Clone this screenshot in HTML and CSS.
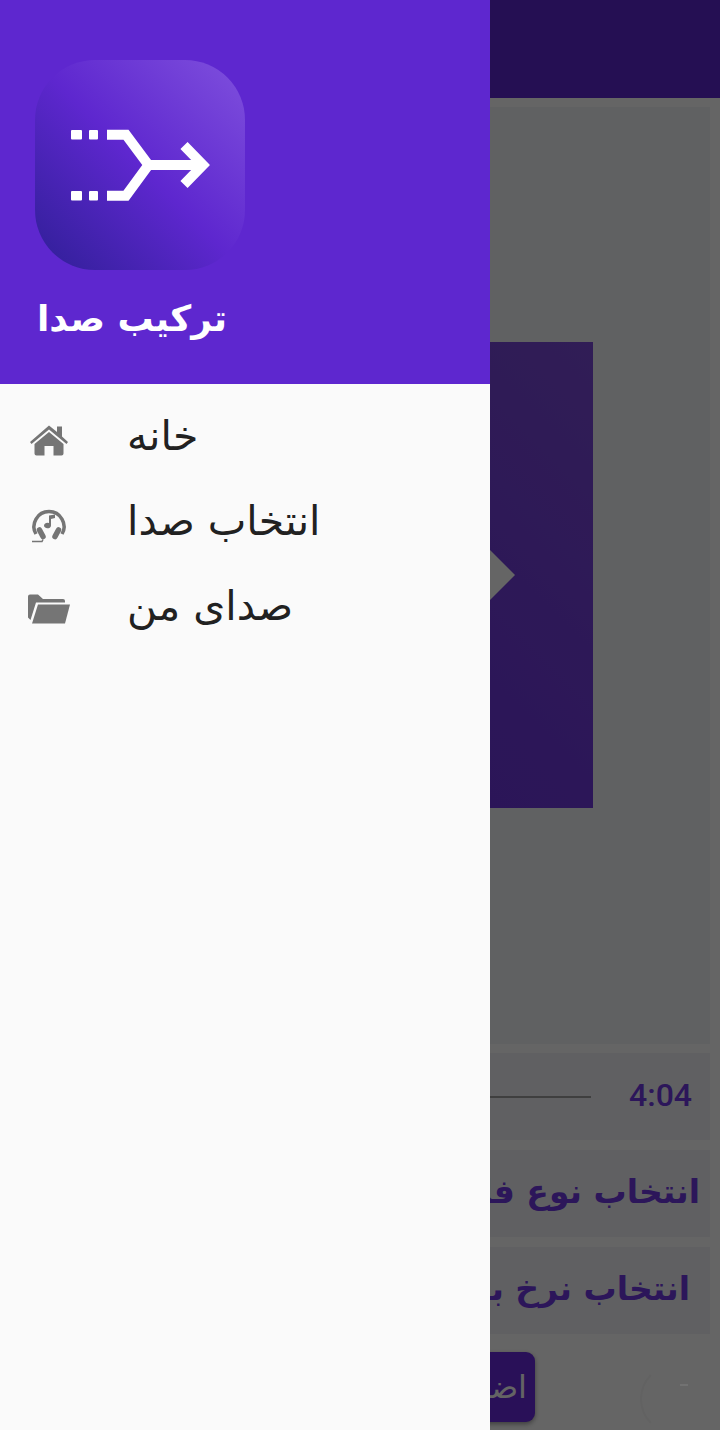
FILE: index.html
```html
<!DOCTYPE html>
<html lang="fa">

<head>
    <meta charset="utf-8">
    <meta name="viewport" content="width=device-width, initial-scale=1.0">
    <title>ترکیب صدا</title>
    <link rel="stylesheet" href="styles.css">
</head>

<body>
    <div class="app">
        <header class="appbar"></header>

        <main class="innehall">
            <section class="kort_stor">
                <div class="spelare">
                    <div class="play"></div>
                </div>
            </section>

            <section class="rad tid">
                <div class="linje"></div>
                <span class="tid_text">4:04</span>
            </section>
            <section class="rad val" dir="rtl">انتخاب نوع فایل</section>
            <section class="rad val val_tva" dir="rtl">انتخاب نرخ بیت</section>

            <div class="botten">
                <button class="lagg_till" dir="rtl">اضافه</button>
                <div class="cirkel"></div>
            </div>
        </main>

        <!-- scrim + drawer ligger ovanpå sidan -->
        <div class="scrim"></div>
        <div class="prick"></div>
        <aside class="drawer">
            <div class="drawer_top">
                <svg class="logo" viewBox="0 0 210 210">
                    <defs>
                        <linearGradient id="logofarg" x1="0" y1="1" x2="1" y2="0">
                            <stop offset="0" stop-color="#2f1f96" />
                            <stop offset="0.5" stop-color="#5e27cf" />
                            <stop offset="1" stop-color="#7f50dd" />
                        </linearGradient>
                    </defs>
                    <rect width="210" height="210" rx="60" fill="url(#logofarg)" />
                    <g fill="#fff">
                        <rect x="36" y="70" width="11" height="9.500" rx="1" />
                        <rect x="54" y="70" width="9" height="9.500" rx="1" />
                        <rect x="36" y="131" width="11" height="9.500" rx="1" />
                        <rect x="54" y="131" width="9" height="9.500" rx="1" />
                    </g>
                    <path d="M72 74.800H91L113.500 105H168M72 135.800H91L113.500 105" fill="none" stroke="#fff" stroke-width="10" />
                    <path d="M149 85.500L168 105L149 124.500" fill="none" stroke="#fff" stroke-width="10" />
                </svg>
                <h1 class="app_namn" dir="rtl">ترکیب صدا</h1>
            </div>

            <nav class="meny">
                <a class="meny_rad">
                    <svg class="ikon" viewBox="0 0 42 38">
                        <path d="M21 4.500L29 11V5.500H34V15.500L40 21L38.500 23L21 8.500L3.500 23L2 21Z" fill="#757575" />
                        <path d="M21 11L35.500 23V32.500a2 2 0 0 1-2 2H25.500V25H16.500V34.500H8.500a2 2 0 0 1-2-2V23Z" fill="#757575" />
                    </svg>
                    <span dir="rtl">خانه</span>
                </a>
                <a class="meny_rad">
                    <svg class="ikon" viewBox="0 0 42 38">
                        <path d="M8 28A15 15 0 1 1 34 28" fill="none" stroke="#757575" stroke-width="3.500" />
                        <path d="M11.500 24L15 30.500M30.500 24L27 30.500" fill="none" stroke="#757575" stroke-width="5.500" stroke-linecap="round" />
                        <path d="M21 9.500L27 8.500V12L23 13V19.500a3.500 2.800 0 1 1-2-2.500Z" fill="#757575" />
                        <path d="M4 35.500H14L15 33.500" fill="none" stroke="#757575" stroke-width="1.500" />
                    </svg>
                    <span dir="rtl">انتخاب صدا</span>
                </a>
                <a class="meny_rad">
                    <svg class="ikon" viewBox="0 0 42 38">
                        <path d="M0 5.500a2 2 0 0 1 2-2H10L15 8H35a2 2 0 0 1 2 2V11.500H8L2.500 29L0 26.500Z" fill="#757575" />
                        <path d="M10 13.500H42L37 32.500H4Z" fill="#757575" />
                    </svg>
                    <span dir="rtl">صدای من</span>
                </a>
            </nav>
        </aside>
    </div>
</body>

</html>
```

FILE: styles.css
```css
html,
body {
    margin: 0px;
    background-color: #fdfdfd;
    font-family: "DejaVu Sans", "Noto Sans", sans-serif;
}

.app {
    position: relative;
    width: 720px;
    height: 1430px;
    overflow: hidden;
}

.appbar {
    height: 98px;
    background-color: #5e27cf;
}

.innehall {
    display: flex;
    flex-direction: column;
    padding: 9px 10px 0px 10px;
}

.kort_stor {
    height: 937px;
    display: flex;
    align-items: center;
    justify-content: center;
    background-color: #f0f2f5;
}

.spelare {
    width: 466px;
    height: 466px;
    margin-top: -1px;
    box-sizing: border-box;
    padding-right: 78px;
    display: flex;
    align-items: center;
    justify-content: flex-end;
    background: linear-gradient(225deg, #7a4ad6, #6e38dc 50%, #6a2ed8);
}

.play {
    width: 0px;
    height: 0px;
    border-style: solid;
    border-width: 75px 0px 75px 75px;
    border-color: transparent transparent transparent #fdfdfd;
}

.rad {
    height: 87px;
    margin-top: 10px;
    display: flex;
    align-items: center;
    background-color: #f0f1f4;
    color: #6e38e0;
}

.tid {
    margin-top: 9px;
    justify-content: flex-end;
}

.linje {
    flex: 1;
    height: 2px;
    margin-right: 38px;
    background-color: #9e9e9e;
}

.tid_text {
    margin-right: 18px;
    margin-bottom: 4px;
    font-family: Roboto, sans-serif;
    font-weight: 500;
    font-size: 32px;
}

.val {
    box-sizing: border-box;
    padding-right: 10px;
    padding-bottom: 5px;
    font-size: 33px;
    font-weight: bold;
    white-space: nowrap;
}

.val_tva {
    padding-right: 20px;
}

.botten {
    display: flex;
    justify-content: space-between;
    margin-top: 18px;
}

.lagg_till {
    width: 200px;
    height: 70px;
    margin-left: 325px;
    border: none;
    border-radius: 9px;
    padding: 0px 8px;
    background-color: #6628dc;
    color: #fafafa;
    font-family: inherit;
    font-size: 32px;
    text-align: right;
    box-shadow: 0px 2px 5px rgba(0, 0, 0, 0.4);
}

.cirkel {
    box-sizing: border-box;
    width: 70px;
    height: 70px;
    margin-top: 12px;
    border: 2px solid transparent;
    border-left-color: #f4f4f4;
    border-radius: 50%;
}

.scrim {
    position: absolute;
    top: 0px;
    left: 0px;
    right: 0px;
    bottom: 0px;
    background-color: rgba(0, 0, 0, 0.6);
}

.prick {
    position: absolute;
    top: 1384px;
    left: 680px;
    width: 8px;
    height: 2px;
    background-color: #727272;
}

.drawer {
    position: absolute;
    top: 0px;
    left: 0px;
    bottom: 0px;
    width: 490px;
    background-color: #fafafa;
}

.drawer_top {
    height: 384px;
    box-sizing: border-box;
    padding: 60px 0px 0px 35px;
    background-color: #5e27cf;
}

.logo {
    display: block;
    width: 210px;
    height: 210px;
}

.app_namn {
    display: inline-block;
    margin: 28px 0px 0px 2px;
    color: #fff;
    font-size: 36px;
    font-weight: bold;
}

.meny {
    padding-top: 9px;
}

.meny_rad {
    height: 85px;
    display: flex;
    align-items: center;
    color: #212121;
    font-size: 41px;
}

.ikon {
    width: 42px;
    height: 38px;
    margin: 8px 57px 0px 28px;
    flex-shrink: 0;
}
```
